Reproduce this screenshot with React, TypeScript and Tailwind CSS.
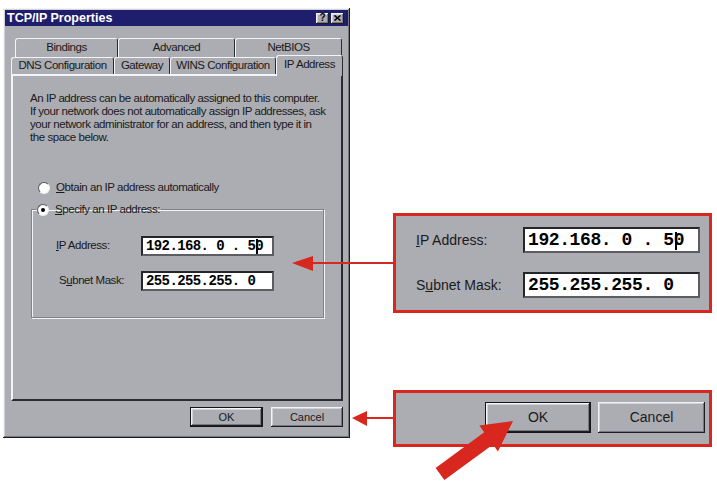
import React from "react";

const face = "bg-[#acacb3]";
const raised =
  "shadow-[inset_-1px_-1px_#1e1e22,inset_1px_1px_#f4f4f6,inset_-2px_-2px_#77777f,inset_2px_2px_#d2d2d8]";
const ui = "font-['Liberation_Sans',Arial,sans-serif]";
const mono = "font-['Liberation_Mono','Courier_New',monospace]";

const U = ({ children }: { children: React.ReactNode }) => (
  <span className="underline underline-offset-[1px] decoration-[1px]">{children}</span>
);

const Radio = ({ checked }: { checked?: boolean }) => (
  <span className="flex items-center justify-center w-[12px] h-[12px] rounded-full bg-white border-[1.5px] border-t-[#55555c] border-l-[#55555c] border-r-[#eeeef0] border-b-[#eeeef0]">
    {checked && <span className="w-[4px] h-[4px] rounded-full bg-black" />}
  </span>
);

const IpText = ({ big }: { big?: boolean }) => (
  <span className="whitespace-pre">
    192.168. 0 . 5
    <span className="relative">
      0
      <span
        className={`absolute left-[1px] ${big ? "top-[2px] bottom-[0px]" : "top-[1px] bottom-[0px]"} w-[2px] bg-black`}
      />
    </span>
  </span>
);

const Field = ({ children, className }: { children: React.ReactNode; className: string }) => (
  <div
    className={`flex items-center bg-white border-2 border-t-[#26262a] border-l-[#26262a] border-r-[#5c5c62] border-b-[#5c5c62] ${mono} font-bold text-black ${className}`}
  >
    {children}
  </div>
);

const Tab = ({ label, w, h }: { label: string; w: string; h: string }) => (
  <div
    className={`${w} ${h} flex items-center justify-center border-t border-l border-t-[#f4f4f6] border-l-[#f4f4f6] border-r-[1.5px] border-r-[#2a2a30] rounded-t-[3px] text-[11.5px] tracking-[-0.45px] text-[#1a1a1a]`}
  >
    {label}
  </div>
);

function Dialog() {
  return (
    <div className={`ml-[3px] mt-[8px] w-[347px] h-[430px] p-[2px] flex flex-col ${face} ${raised} ${ui}`}>
      <div className="h-[16px] bg-[#1e1e6c] flex items-center pl-[2px] pr-[4px]">
        <span className="text-white font-bold text-[12.5px]">TCP/IP Properties</span>
        <div className="ml-auto flex gap-[2px]">
          <div className={`w-[13px] h-[11px] ${face} ${raised} flex items-center justify-center text-[10px] font-bold leading-none text-black`}>
            ?
          </div>
          <div className={`w-[13px] h-[11px] ${face} ${raised} flex items-center justify-center`}>
            <svg width="7" height="6" viewBox="0 0 7 6">
              <path d="M0.5 0.5 L6.5 5.5 M6.5 0.5 L0.5 5.5" stroke="#000" strokeWidth="1.6" />
            </svg>
          </div>
        </div>
      </div>

      <div className="mt-[12px] pl-[6px] pr-[5px] flex flex-col">
        <div className="flex h-[19px] ml-[4px]">
          <Tab label="Bindings" w="w-[103px]" h="h-[19px]" />
          <Tab label="Advanced" w="w-[117px]" h="h-[19px]" />
          <Tab label="NetBIOS" w="w-[107px]" h="h-[19px]" />
        </div>
        <div className="flex items-end h-[17px]">
          <Tab label="DNS Configuration" w="w-[103px]" h="h-[17px]" />
          <Tab label="Gateway" w="w-[56px]" h="h-[17px]" />
          <Tab label="WINS Configuration" w="w-[106px]" h="h-[17px]" />
          <div className={`relative z-10 -mb-[2px] w-[67px] h-[21px] pb-[3px] ${face} flex items-center justify-center border-t border-l border-t-[#f4f4f6] border-l-[#f4f4f6] border-r-[1.5px] border-r-[#2a2a30] rounded-t-[3px] text-[11.5px] tracking-[-0.45px] text-[#1a1a1a]`}>
            IP Address
          </div>
        </div>

        <div className="h-[327px] border-2 border-t-[#f4f4f6] border-l-[#f4f4f6] border-r-[#2a2a30] border-b-[#2a2a30] text-[11.5px] tracking-[-0.45px] text-[#1a1a1a]">
          <p className="mt-[16px] ml-[17px] leading-[13px] whitespace-nowrap">
            An IP address can be automatically assigned to this computer.
            <br />
            If your network does not automatically assign IP addresses, ask
            <br />
            your network administrator for an address, and then type it in
            <br />
            the space below.
          </p>

          <div className="mt-[37px] ml-[25px] h-[13px] flex items-center gap-[6px]">
            <Radio />
            <span>
              <U>O</U>btain an IP address automatically
            </span>
          </div>

          <fieldset className="mt-[9px] ml-[18px] w-[293px] h-[115px] border border-[#808088] shadow-[inset_1px_1px_#f4f4f6,1px_1px_#f4f4f6]">
            <legend className="ml-[4px] px-[1px] h-[13px] flex items-center gap-[6px] leading-[13px]">
              <Radio checked />
              <span>
                <U>S</U>pecify an IP address:
              </span>
            </legend>
            <div className="mt-[20px] ml-[24px] grid grid-cols-[85px_133px] grid-rows-[20px_20px] gap-y-[15px] items-center">
              <span>
                <U>I</U>P Address:
              </span>
              <Field className="h-[20px] pl-[3px] text-[14px] tracking-[-0.6px]">
                <IpText />
              </Field>
              <span className="pl-[3px]">
                S<U>u</U>bnet Mask:
              </span>
              <Field className="h-[20px] pl-[3px] text-[14px] tracking-[-0.6px]">
                255.255.255. 0
              </Field>
            </div>
          </fieldset>
        </div>

        <div className="mt-[6px] flex justify-end gap-[8px] text-[11px] text-[#1a1a1a]">
          <div className="w-[73px] h-[20px] border border-[#141418]">
            <div className={`w-full h-full ${face} ${raised} flex items-center justify-center`}>OK</div>
          </div>
          <div className={`w-[72px] h-[20px] ${face} ${raised} flex items-center justify-center`}>Cancel</div>
        </div>
      </div>
    </div>
  );
}

function Callouts() {
  return (
    <div className={`ml-[43px] flex flex-col ${ui} text-[#1a1a1a]`}>
      <div className={`mt-[213px] w-[319px] h-[100px] border-[3px] border-[#d7271f] ${face} pl-[20px] pt-[11px]`}>
        <div className="grid grid-cols-[107px_177px] grid-rows-[26px_26px] gap-y-[19px] items-center text-[14px]">
          <span>
            <U>I</U>P Address:
          </span>
          <Field className="h-[26px] pl-[3px] text-[18px] tracking-[-0.4px]">
            <IpText big />
          </Field>
          <span>
            S<U>u</U>bnet Mask:
          </span>
          <Field className="h-[26px] pl-[3px] text-[18px] tracking-[-0.4px]">
            255.255.255. 0
          </Field>
        </div>
      </div>

      <div className={`mt-[77px] w-[319px] h-[57px] border-[3px] border-[#d7271f] ${face} pt-[9px] pl-[89px] flex gap-[7px] text-[14px]`}>
        <div className="w-[106px] h-[31px] border-[1.5px] border-[#141418]">
          <div className={`w-full h-full ${face} ${raised} flex items-center justify-center`}>OK</div>
        </div>
        <div className={`w-[107px] h-[31px] ${face} ${raised} flex items-center justify-center`}>Cancel</div>
      </div>
    </div>
  );
}

export default function App() {
  return (
    <div className="relative w-[717px] h-[482px] bg-white overflow-hidden">
      <div className="flex">
        <Dialog />
        <Callouts />
      </div>

      <svg className="absolute inset-0 pointer-events-none" width="717" height="482" viewBox="0 0 717 482">
        <line x1="310" y1="263" x2="394" y2="263" stroke="#d7271f" strokeWidth="2" />
        <polygon points="292,263 313,256 313,271" fill="#d7271f" />
        <line x1="364" y1="418" x2="394" y2="418" stroke="#d7271f" strokeWidth="2" />
        <polygon points="352,418 367,411 367,426" fill="#d7271f" />
        <polygon
          points="513,421 497.9,451.4 493,444.5 444.4,480.1 435.6,467.9 484.2,432.3 479.3,425.4"
          fill="#d7271f"
        />
      </svg>
    </div>
  );
}
